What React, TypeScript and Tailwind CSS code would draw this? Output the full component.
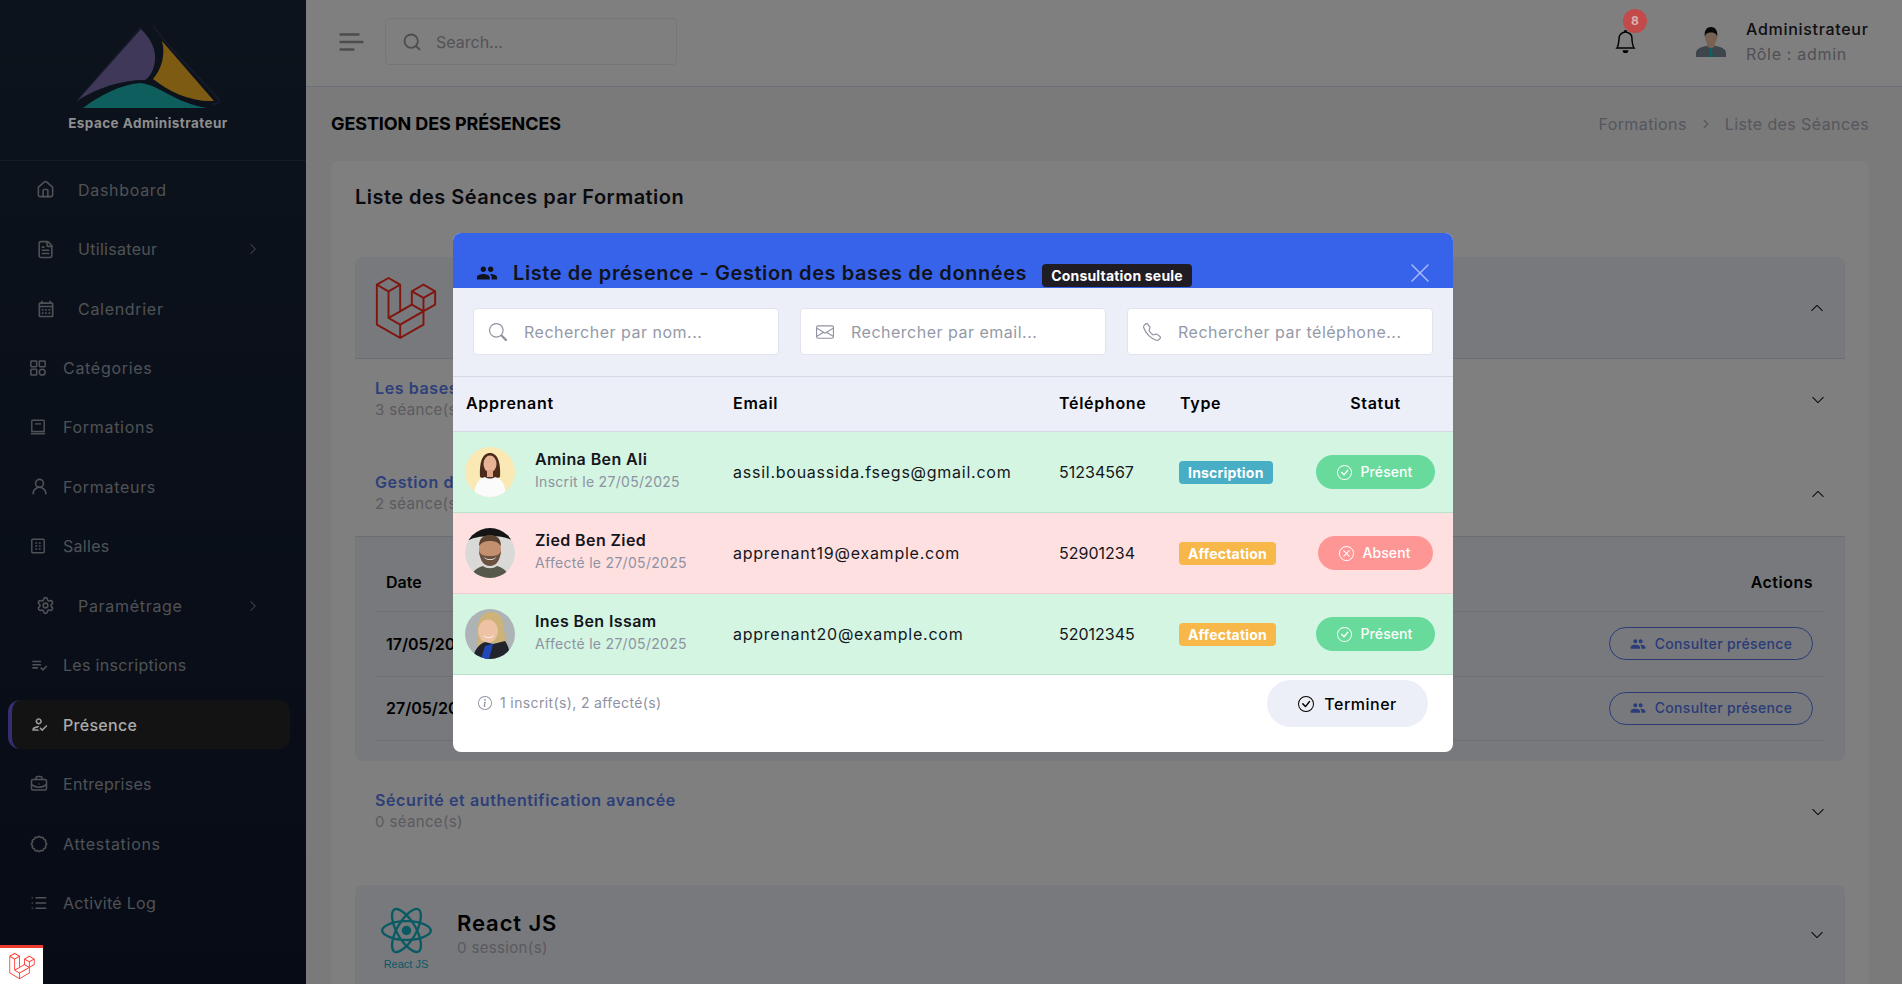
import { BriefcaseBusiness, ChevronRight, FileText, House, List, Search, Settings, UserRound, X } from "lucide-react";
import { BsBell, BsCheckCircle, BsChevronDown, BsChevronRight, BsChevronUp, BsEnvelope, BsInfoCircle, BsSearch, BsTelephone, BsXCircle } from "react-icons/bs";
import { MdOutlineCalendarMonth, MdOutlineHowToReg, MdOutlinePlaylistAddCheck, MdPeople } from "react-icons/md";
import { SiLaravel, SiReact } from "react-icons/si";

function CategoriesIcon() {
  return (
    <svg width="16" height="16" viewBox="0 0 18 18" fill="none" stroke="currentColor" strokeWidth="1.7">
      <rect x="1" y="1" width="6.5" height="6.5" rx="0.8" />
      <rect x="10.5" y="1" width="6.5" height="6.5" rx="0.8" />
      <rect x="1" y="10.5" width="6.5" height="6.5" rx="0.8" />
      <circle cx="13.75" cy="13.75" r="3.25" />
    </svg>
  );
}

function BookIcon() {
  return (
    <svg width="16" height="16" viewBox="0 0 18 18" fill="none" stroke="currentColor" strokeWidth="1.6">
      <path d="M2 15V2.500A1 1 0 0 1 3 1.500h12a1 1 0 0 1 1 1V15" />
      <path d="M1 16.500h16" strokeWidth="1.800" />
      <path d="M2 14h14M5.500 5.500h7" />
    </svg>
  );
}

function RoomIcon() {
  return (
    <svg width="16" height="16" viewBox="0 0 18 18" fill="none" stroke="currentColor" strokeWidth="1.6">
      <rect x="2" y="1.500" width="14" height="15" rx="1" />
      <path d="M6 5.500h2M10 5.500h2M6 9h2M10 9h2M6 12.500h2M10 12.500h2" strokeWidth="1.700" />
    </svg>
  );
}

// scalloped seal for Attestations
function SealIcon() {
  const points = Array.from({ length: 24 }, (_, i) => {
    const r = i % 2 === 0 ? 8.6 : 7.5;
    const a = (i * Math.PI) / 12;
    return `${(10 + r * Math.cos(a)).toFixed(2)},${(10 + r * Math.sin(a)).toFixed(2)}`;
  }).join(" ");
  return (
    <svg width="18" height="18" viewBox="0 0 20 20" fill="none" stroke="currentColor" strokeWidth="1.7" strokeLinejoin="round">
      <polygon points={points} />
    </svg>
  );
}

function Logo() {
  return (
    <svg width="144" height="85" viewBox="76 25 144 85" fill="none">
      <path d="M77 101 141 27M153 25c12 20 50 55 67 76-2 3-5 3-8 3" stroke="#2f3558" strokeWidth="1.500" />
      <path d="M141 29C150 38 156 48 155 60C154 70 150 77 145 80C120 80 98 88 78 100Z" fill="#7e70b0" />
      <path d="M162 41L214 101C190 102 170 92 153 79C161 70 166 55 162 41Z" fill="#fab626" />
      <path d="M83 108C100 95 120 85 140 83C160 85 175 103 207 108Z" fill="#1ebcbc" />
    </svg>
  );
}

function AdminAvatar() {
  return (
    <svg width="30" height="30" viewBox="0 0 30 30">
      <path d="M0 30v-4c0-4 5-6 10-7h10c5 1 10 3 10 7v4Z" fill="#7b8a9b" />
      <path d="M11 19l4 3 4-3v-3h-8Z" fill="#f0c4a6" />
      <path d="M13.500 21h3l-.6 2 1 7h-3.800l1-7Z" fill="#18c4c8" />
      <ellipse cx="15" cy="10.500" rx="6" ry="7.500" fill="#f0c4a6" />
      <path d="M8.800 10C8 3 11 0 15 0s7 3 6.200 10c-.7-3-2-4.500-6.200-4.500S9.500 7 8.800 10Z" fill="#111" />
    </svg>
  );
}

function AvatarAmina() {
  return (
    <svg className="shrink-0 rounded-full" width="50" height="50" viewBox="0 0 50 50">
      <rect width="50" height="50" fill="#fbe9b5" />
      <path d="M15 30C14 12 19 6 25 6s11 6 10 24l-5 2H20Z" fill="#4b2c1c" />
      <ellipse cx="25" cy="17" rx="6.500" ry="8.500" fill="#e8b394" />
      <path d="M22 23h6v7h-6Z" fill="#e0a888" />
      <path d="M9 50c0-12 5-19 11-20 3 2 7 2 10 0 6 1 11 8 11 20Z" fill="#fbfbfb" />
      <path d="M21 20c2 3 6 3 8 0-1 3-7 3-8 0Z" fill="#fff" />
    </svg>
  );
}

function AvatarZied() {
  return (
    <svg className="shrink-0 rounded-full" width="50" height="50" viewBox="0 0 50 50">
      <rect width="50" height="50" fill="#d9dad8" />
      <path d="M0 0h50v14C40 6 12 6 0 14Z" fill="#141414" />
      <ellipse cx="25" cy="22" rx="11" ry="14" fill="#c3906f" />
      <path d="M14 18c0-9 6-11 11-11s11 2 11 11c-3-4-6-5-11-5s-8 1-11 5Z" fill="#5c4331" />
      <path d="M14 23c1 10 5 15 11 15s10-5 11-15c-2 4-4 5-11 5s-9-1-11-5Z" fill="#6b5140" />
      <path d="M19 29c3 3 9 3 12 0-1 4-11 4-12 0Z" fill="#fff" />
      <path d="M6 50c1-8 8-11 12-12 4 3 10 3 14 0 4 1 11 4 12 12Z" fill="#55584a" />
    </svg>
  );
}

function AvatarInes() {
  return (
    <svg className="shrink-0 rounded-full" width="50" height="50" viewBox="0 0 50 50">
      <rect width="50" height="50" fill="#aeb3b6" />
      <path d="M12 24C12 9 18 3 26 3s13 6 13 18l3 15H32L20 30l-7 9Z" fill="#cdb27a" />
      <ellipse cx="23" cy="22" rx="10" ry="11.500" fill="#eec2a4" />
      <path d="M18 26c3 3 8 3 11 0-1 4-10 4-11 0Z" fill="#fff" />
      <path d="M8 50c1-9 6-15 12-17l8 2 12-3c3 4 5 10 5 18Z" fill="#22242c" />
      <path d="M16 50l4-13 8-2-4 15Z" fill="#2148b8" />
    </svg>
  );
}

const navItems = [
  { label: "Dashboard", icon: <House size={19} />, wide: true },
  { label: "Utilisateur", icon: <FileText size={19} />, wide: true, arrow: true, tight: true },
  { label: "Calendrier", icon: <MdOutlineCalendarMonth size={20} />, wide: true },
  { label: "Catégories", icon: <CategoriesIcon /> },
  { label: "Formations", icon: <BookIcon /> },
  { label: "Formateurs", icon: <UserRound size={19} /> },
  { label: "Salles", icon: <RoomIcon />, tight: true },
  { label: "Paramétrage", icon: <Settings size={19} />, wide: true, arrow: true },
  { label: "Les inscriptions", icon: <MdOutlinePlaylistAddCheck size={19} />, tight: true },
  { label: "Présence", icon: <MdOutlineHowToReg size={19} />, active: true },
  { label: "Entreprises", icon: <BriefcaseBusiness size={18} />, tight: true },
  { label: "Attestations", icon: <SealIcon /> },
  { label: "Activité Log", icon: <List size={18} />, tight: true },
];

const learners = [
  { name: "Amina Ben Ali", sub: "Inscrit le 27/05/2025", email: "assil.bouassida.fsegs@gmail.com", phone: "51234567", type: "Inscription", present: true, avatar: <AvatarAmina /> },
  { name: "Zied Ben Zied", sub: "Affecté le 27/05/2025", email: "apprenant19@example.com", phone: "52901234", type: "Affectation", present: false, avatar: <AvatarZied /> },
  { name: "Ines Ben Issam", sub: "Affecté le 27/05/2025", email: "apprenant20@example.com", phone: "52012345", type: "Affectation", present: true, avatar: <AvatarInes /> },
];

function Sidebar() {
  return (
    <aside className="w-[306px] shrink-0 h-full bg-linear-to-b from-[#1a2738] to-[#0e172c] shadow-[4px_0_16px_rgba(0,0,0,0.12)]">
      <div className="h-[161px] border-b border-[#2c3750] flex flex-col items-center pt-[25px] pr-[10px]">
        <Logo />
        <div className="relative z-50 mt-[3px] text-[13.5px] leading-5 font-bold text-[#8e8e8e] tracking-[0.45px]">Espace Administrateur</div>
      </div>
      <nav className="-mt-[1px]">
        {navItems.map((item) => (
          <div key={item.label} className="h-[59.45px] flex items-center">
            {item.active ? (
              <div className="w-[282px] ml-[8px] h-[49px] flex items-center rounded-xl border-l-4 border-[#6a5ce0] bg-[#262626] pl-[18px]">
                <span className="relative z-50 w-[33px] text-[#9c9c9c]">{item.icon}</span>
                <span className="relative z-50 text-base font-medium text-[#ababab] tracking-[0.3px]">{item.label}</span>
              </div>
            ) : (
              <div className={item.wide ? "w-full flex items-center pl-[36px] pr-[47px] text-[#9fa3ab]" : "w-full flex items-center pl-[30px] text-[#9fa3ab]"}>
                <span className={item.wide ? "w-[42px]" : "w-[33px]"}>{item.icon}</span>
                <span className={item.tight ? "text-base tracking-[0.3px]" : "text-base tracking-[0.7px]"}>{item.label}</span>
                {item.arrow && <BsChevronRight size={12} className="ml-auto" />}
              </div>
            )}
          </div>
        ))}
      </nav>
    </aside>
  );
}

function Topbar() {
  return (
    <header className="h-[87px] shrink-0 bg-white border-b border-[#dcdcf0] flex items-center pl-[33px] pr-[33px] pb-[3px]">
      <svg width="25" height="18" viewBox="0 0 25 18" fill="none" stroke="#9a9a9e" strokeWidth="2.400" strokeLinecap="round">
        <path d="M1.500 1.500h18M1.500 9h22M1.500 16.500h13" />
      </svg>
      <div className="ml-[21px] w-[292px] h-[47px] rounded border border-[#ededf5] flex items-center pl-[16px]">
        <Search size={20} strokeWidth={2.2} className="text-[#9a9ba3]" />
        <span className="ml-[14px] text-base text-[#a6a6b0]">Search...</span>
      </div>
      <div className="ml-auto relative mr-[59px] text-black">
        <BsBell size={23} />
        <span className="absolute z-50 -top-[21px] left-[9px] w-[24px] h-[24px] rounded-full bg-[#c24a4a] text-[#d9b2b2] text-xs font-bold flex items-center justify-center">8</span>
      </div>
      <AdminAvatar />
      <div className="ml-[20px] w-[123px] whitespace-nowrap">
        <div className="text-base leading-6 font-medium text-[#1e2029] tracking-[0.7px]">Administrateur</div>
        <div className="text-base leading-6 text-[#a0a0ae] mt-[1px] tracking-[0.7px]">Rôle : admin</div>
      </div>
    </header>
  );
}

function SubHeader({ title, count, open }: { title: string; count: string; open?: boolean }) {
  return (
    <div className="h-[83px] flex items-start justify-between px-[20px] pt-[17px]">
      <div>
        <div className="text-base leading-6 font-semibold text-[#5a7ef0] tracking-[0.6px]">{title}</div>
        <div className="text-[15px] leading-5 text-[#b4b4c0] tracking-[0.35px]">{count}</div>
      </div>
      <span className="mt-[17px] text-black">{open ? <BsChevronUp size={14} /> : <BsChevronDown size={14} />}</span>
    </div>
  );
}

function SessionRow({ date }: { date: string }) {
  return (
    <div className="h-[64.5px] border-b border-[#dddfe8] flex items-center justify-between pl-[11px] pr-[12px]">
      <span className="text-base font-semibold text-black">{date}</span>
      <button className="w-[204px] h-[33px] rounded-full border border-[#5478f0] flex items-center justify-center gap-[9px] text-sm font-medium text-[#5478f0] tracking-[0.35px]">
        <MdPeople size={16} />
        Consulter présence
      </button>
    </div>
  );
}

function Page() {
  return (
    <main className="flex-1 h-full flex flex-col min-w-0 bg-[#f4f4f4]">
      <Topbar />
      <div className="h-[74px] shrink-0 flex items-center justify-between pl-[25px] pr-[33px] pb-[1px]">
        <h1 className="text-lg font-bold text-black tracking-[-0.1px]">GESTION DES PRÉSENCES</h1>
        <div className="flex items-center gap-[12px] text-base text-[#acacbc] tracking-[0.4px]">
          <span>Formations</span>
          <ChevronRight size={14} />
          <span>Liste des Séances</span>
        </div>
      </div>
      <section className="ml-[25px] mr-[33px] flex-1 rounded-t-lg bg-white px-[24px] pt-[21px]">
        <h2 className="text-xl leading-[30px] font-semibold text-[#14151c] tracking-[0.47px]">Liste des Séances par Formation</h2>
        <div className="mt-[45px] h-[102px] rounded-t-lg bg-[#f0f2fa] border-b border-[#d8dae6] flex items-center justify-between pl-[20px] pr-[21px]">
          <SiLaravel size={62} className="text-[#ff2d20]" />
          <BsChevronUp size={14} className="text-black" />
        </div>
        <SubHeader title="Les bases" count="3 séance(s)" />
        <div className="mt-[11px]">
          <SubHeader title="Gestion des bases de données" count="2 séance(s)" open />
        </div>
        <div className="h-[225px] rounded-b-lg bg-[#f0f2fa] border-t border-[#d8dae6] px-[20px]">
          <div className="h-[75px] border-b border-[#dddfe8] flex items-end justify-between pl-[11px] pr-[12px] pb-[17px]">
            <span className="text-base font-semibold text-black">Date</span>
            <span className="text-base font-semibold text-black tracking-[0.5px]">Actions</span>
          </div>
          <SessionRow date="17/05/2025" />
          <SessionRow date="27/05/2025" />
        </div>
        <div className="mt-[10px]">
          <SubHeader title="Sécurité et authentification avancée" count="0 séance(s)" />
        </div>
        <div className="mt-[31px] h-[101px] rounded-t-lg bg-[#f0f2fa] flex items-start justify-between pl-[25px] pr-[21px] pt-[20px]">
          <div className="flex">
            <div className="w-[52px] flex flex-col items-center text-[#14b4c8]">
              <SiReact size={51} />
              <span className="font-['Liberation_Sans',sans-serif] text-[11px] leading-[12px] mt-[2px]">React JS</span>
            </div>
            <div className="ml-[25px]">
              <div className="text-[22px] leading-[30px] font-semibold text-black mt-[3px] tracking-[0.9px]">React JS</div>
              <div className="text-[15px] leading-5 text-[#b4b4c0] tracking-[0.35px]">0 session(s)</div>
            </div>
          </div>
          <BsChevronDown size={14} className="text-black mt-[23px]" />
        </div>
      </section>
    </main>
  );
}

function SearchField({ icon, placeholder }: { icon: React.ReactNode; placeholder: string }) {
  return (
    <div className="flex-1 h-[47px] rounded bg-white border border-[#e0e3ee] flex items-center pl-[15px]">
      <span className="w-[35px] text-[#8f93a1]">{icon}</span>
      <span className="text-base text-[#9499a8] tracking-[0.5px]">{placeholder}</span>
    </div>
  );
}

function AttendanceModal() {
  return (
    <div className="absolute z-50 left-[453px] top-[233px] w-[1000px] h-[519px] rounded-lg overflow-hidden bg-white flex flex-col">
      <div className="h-[55px] shrink-0 bg-[#3763eb] flex items-center pt-[25px] pl-[23px] text-[#10131c]">
        <MdPeople size={22} />
        <div className="ml-[15px] text-xl leading-[30px] font-semibold whitespace-nowrap tracking-[0.58px]">Liste de présence - Gestion des bases de données</div>
        <span className="ml-[15px] mt-[5px] h-[23px] px-[9px] rounded bg-[#1f1c24] text-white text-sm font-bold flex items-center tracking-[0.2px]">Consultation seule</span>
        <X size={32} strokeWidth={1} className="ml-auto mr-[17px] text-[#aabbf6]" />
      </div>
      <div className="h-[88px] shrink-0 bg-[#edeff8] flex items-center gap-[21px] px-[20px] pb-[1px]">
        <SearchField icon={<BsSearch size={18} />} placeholder="Rechercher par nom..." />
        <SearchField icon={<BsEnvelope size={18} />} placeholder="Rechercher par email..." />
        <SearchField icon={<BsTelephone size={18} />} placeholder="Rechercher par téléphone..." />
      </div>
      <div className="h-[56px] shrink-0 bg-[#edeff8] border-y border-[#d6d9e3] grid grid-cols-[267px_326px_121px_118px_1fr] items-center pl-[13px] pb-[2px] text-base font-semibold text-black tracking-[0.7px]">
        <span>Apprenant</span>
        <span>Email</span>
        <span>Téléphone</span>
        <span>Type</span>
        <span className="text-center">Statut</span>
      </div>
      {learners.map((l) => (
        <div
          key={l.name}
          className={
            l.present
              ? "h-[81px] shrink-0 bg-[#d3f5e2] border-b border-[#b8e2ca] grid grid-cols-[267px_326px_121px_118px_1fr] items-center pl-[12px] text-base text-[#15161c]"
              : "h-[81px] shrink-0 bg-[#ffe0e1] border-b border-[#f0cdd0] grid grid-cols-[267px_326px_121px_118px_1fr] items-center pl-[12px] text-base text-[#15161c]"
          }
        >
          <div className="flex items-center gap-[20px]">
            {l.avatar}
            <div className="mb-[6px]">
              <div className="leading-6 font-semibold tracking-[0.4px]">{l.name}</div>
              <div className="text-sm leading-5 mt-[1px] text-[#8e92a3] tracking-[0.3px]">{l.sub}</div>
            </div>
          </div>
          <span className="pl-[1px] tracking-[0.75px]">{l.email}</span>
          <span className="pl-[1px]">{l.phone}</span>
          <span>
            <span className={l.type === "Inscription" ? "inline-flex items-center h-[23px] px-[9px] rounded bg-[#48aec5] text-white text-sm font-bold tracking-[0.2px]" : "inline-flex items-center h-[23px] px-[9px] rounded bg-[#f7b749] text-white text-sm font-bold tracking-[0.2px]"}>
              {l.type}
            </span>
          </span>
          <span className="flex justify-center">
            {l.present ? (
              <span className="w-[119px] h-[34px] rounded-full bg-[#68da9b] text-white text-sm font-medium flex items-center justify-center gap-[8px] tracking-[0.1px]">
                <BsCheckCircle size={15} />
                Présent
              </span>
            ) : (
              <span className="w-[115px] h-[34px] rounded-full bg-[#ff9696] text-white text-sm font-medium flex items-center justify-center gap-[8px] tracking-[0.1px]">
                <BsXCircle size={15} />
                Absent
              </span>
            )}
          </span>
        </div>
      ))}
      <div className="flex-1 flex items-start justify-between pl-[25px] pr-[25px] pt-[5px]">
        <div className="h-[45px] flex items-center gap-[8px] text-sm text-[#8e92a3] tracking-[0.37px]">
          <BsInfoCircle size={14} />
          1 inscrit(s), 2 affecté(s)
        </div>
        <button className="w-[161px] h-[47px] rounded-full bg-[#edeff8] flex items-center justify-center gap-[10px] text-base font-medium text-black tracking-[0.5px]">
          <BsCheckCircle size={16} />
          Terminer
        </button>
      </div>
    </div>
  );
}

export default function App() {
  return (
    <div className="relative w-[1902px] h-[984px] overflow-hidden flex font-[Inter,sans-serif]">
      <Sidebar />
      <Page />
      <div className="absolute z-40 inset-0 bg-black/50" />
      <AttendanceModal />
      <div className="absolute z-50 left-0 bottom-0 w-[43px] h-[39px] bg-white border-t-[3px] border-[#ef3b2d] flex items-center justify-center">
        <SiLaravel size={26} className="text-[#ff2d20]" />
      </div>
    </div>
  );
}
